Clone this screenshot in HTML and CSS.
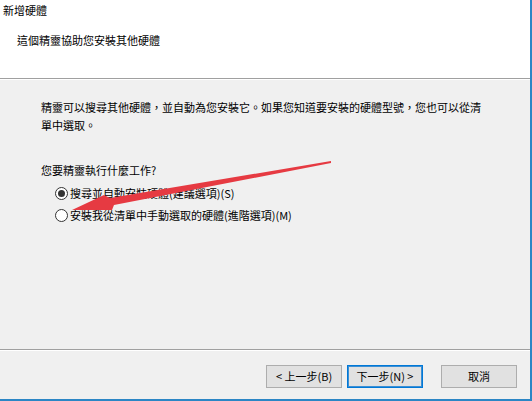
FILE: index.html
```html
<!DOCTYPE html>
<html lang="zh-Hant">
<head>
<meta charset="utf-8">
<title>新增硬體</title>
<link rel="stylesheet" href="styles.css">
</head>
<body>
<div class="window">
  <div class="header">
    <div class="title">新增硬體</div>
    <div class="subtitle">這個精靈協助您安裝其他硬體</div>
  </div>
  <div class="content">
    <p class="desc">精靈可以搜尋其他硬體，並自動為您安裝它。如果您知道要安裝的硬體型號，您也可以從清<br>單中選取。</p>
    <p class="question">您要精靈執行什麼工作?</p>
    <div class="options">
      <label class="option"><span class="radio checked"></span><span>搜尋並自動安裝硬體(建議選項)(S)</span></label>
      <label class="option"><span class="radio"></span><span>安裝我從清單中手動選取的硬體(進階選項)(M)</span></label>
    </div>
  </div>
  <div class="footer">
    <button class="btn">&lt; 上一步(B)</button>
    <button class="btn default">下一步(N) &gt;</button>
    <button class="btn cancel">取消</button>
  </div>
</div>
<svg class="arrow" width="532" height="401" viewBox="0 0 532 401">
  <polygon points="72,210 104,195 110,198 331,161 331,163 114,205 112,210" fill="#e63a42"/>
</svg>
</body>
</html>
```

FILE: styles.css
```css
html, body {
  margin: 0;
  padding: 0;
}
body {
  width: 532px;
  height: 401px;
  overflow: hidden;
  position: relative;
  font-family: "Noto Sans CJK TC", "Noto Sans", sans-serif;
  font-size: 11px;
  color: #000;
  background: #f0f0f0;
}
.window {
  width: 530px;
  height: 399px;
  border-right: 2px solid #2b86c5;
  border-bottom: 2px solid #2b86c5;
  background: #f0f0f0;
  display: flex;
  flex-direction: column;
}
.header {
  flex: none;
  height: 78px;
  background: #fff;
  border-bottom: 1px solid #a0a0a0;
}
.title {
  line-height: 14px;
  padding: 3px 0 0 3px;
}
.subtitle {
  line-height: 14px;
  margin-top: 16px;
  padding-left: 17px;
}
.content {
  flex: 1;
  border-top: 1px solid #fff;
  padding-left: 41px;
}
.desc {
  margin: 18px 0 0 0;
  line-height: 18px;
}
.question {
  margin: 29px 0 0 0;
  line-height: 15px;
}
.options {
  margin-top: 4px;
  display: flex;
  flex-direction: column;
}
.option {
  display: flex;
  align-items: center;
  height: 22px;
  line-height: 22px;
  padding-left: 14px;
}
.radio {
  width: 13px;
  height: 13px;
  box-sizing: border-box;
  border: 1px solid #333;
  border-radius: 50%;
  background: #fff;
  margin-right: 2px;
  display: flex;
  align-items: center;
  justify-content: center;
  flex: none;
}
.radio.checked::after {
  content: "";
  width: 7px;
  height: 7px;
  border-radius: 50%;
  background: #333;
}
.footer {
  flex: none;
  height: 50px;
  box-sizing: border-box;
  border-top: 1px solid #a0a0a0;
  box-shadow: inset 0 1px 0 #fff;
  padding: 15px 13px 0 0;
  display: flex;
  justify-content: flex-end;
  align-items: flex-start;
}
.btn {
  width: 76px;
  height: 23px;
  padding: 0;
  margin: 0 0 0 5px;
  border: 1px solid #adadad;
  background: #e1e1e1;
  font-family: inherit;
  font-size: 11px;
  color: #000;
  line-height: 21px;
}
.btn.default {
  border-color: #0078d7;
  box-shadow: inset 0 0 0 1px #3c8fd4;
}
.btn.cancel {
  margin-left: 18px;
}
.arrow {
  position: absolute;
  top: 0;
  left: 0;
  pointer-events: none;
}
```
